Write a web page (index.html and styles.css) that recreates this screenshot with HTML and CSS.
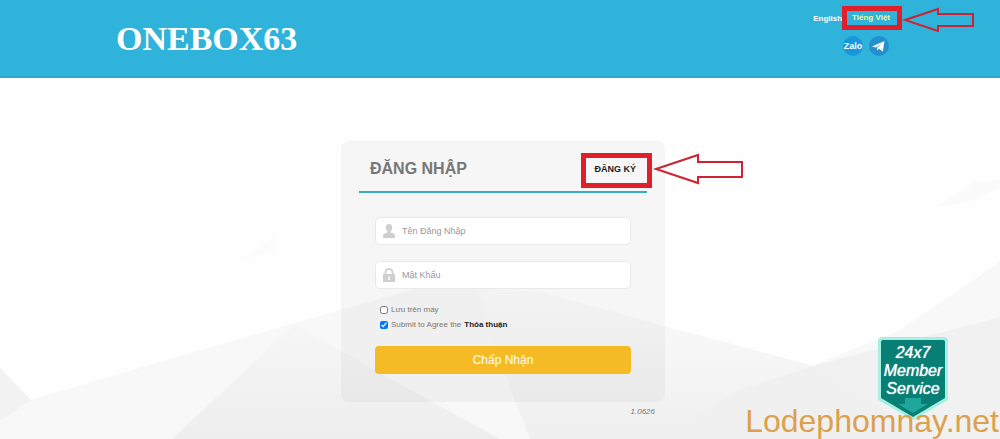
FILE: index.html
```html
<!DOCTYPE html>
<html lang="vi">
<head>
  <meta charset="UTF-8" />
  <meta name="viewport" content="width=device-width, initial-scale=1" />
  <title>ONEBOX63</title>
  <link rel="stylesheet" href="styles.css">
</head>
<body>

  <!-- background facets -->
  <svg class="backdrop" viewBox="0 0 1000 439" preserveAspectRatio="none" aria-hidden="true">
    <defs>
      <linearGradient id="fade" x1="0" y1="0" x2="0" y2="1">
        <stop offset="0" stop-color="#fbfbfb" />
        <stop offset="1" stop-color="#efefef" />
      </linearGradient>
      <linearGradient id="hill" x1="0" y1="0" x2="0" y2="1">
        <stop offset="0" stop-color="#f6f6f6" />
        <stop offset="1" stop-color="#eeeeee" />
      </linearGradient>
    </defs>
    <path d="M0 439V421L31 400L180 356L340 310L425 286L540 292L660 325L813 366L900 330L1000 262V439Z" fill="#f8f8f8" />
    <path d="M0 368L31 400L0 421Z" fill="#f2f2f2" />
    <path d="M172 439L295 324L340 350L380 373L500 439Z" fill="url(#hill)" />
    <path d="M478 289L540 292L660 325L813 366L1000 400V439H530L505 375Z" fill="url(#fade)" />
    <path d="M813 366L1000 317V439H900Z" fill="#f1f1f1" />
    <path d="M813 366L740 390L660 439H930Z" fill="#f0f0f0" />
    <path d="M937 207L975 182L1000 180V188L965 203Z" fill="#fbfbfb" />
    <path d="M239 260L276 235V251Z" fill="#fcfcfc" />
  </svg>

  <header class="header">
    <div class="logo">ONEBOX63</div>
    <div class="tools">
      <nav class="langs">
        <a href="#">English</a>
        <a href="#" class="active marked">Tiếng Việt</a>
        <svg class="arrow arrow-lang" viewBox="0 0 72 26" aria-hidden="true">
          <path d="M3 14L36 3V8H71V20H36V25Z" />
        </svg>
      </nav>
      <div class="social">
        <a href="#" aria-label="Zalo" class="zalo">Zalo</a>
        <a href="#" aria-label="Telegram" class="telegram">
          <svg viewBox="0 0 20 20">
            <path d="M3 10.500L15.500 5L13.800 15.500L9.800 12.800L8 14.500V11.800L12.500 7.800L6.800 11.400Z" />
          </svg>
        </a>
      </div>
    </div>
  </header>

  <main class="main">
    <section class="card">
      <div class="card-head">
        <h1>ĐĂNG NHẬP</h1>
        <a href="#" class="register marked">ĐĂNG KÝ</a>
        <svg class="arrow arrow-register" viewBox="0 0 92 32" aria-hidden="true">
          <path d="M4 16L46 2V9H90V24H46V30Z" />
        </svg>
      </div>

      <form class="form">
        <label class="field">
          <svg viewBox="0 0 12 14" aria-hidden="true">
            <path d="M6 0C8 0 9.300 1.400 9.300 3.500C9.300 5.300 8.500 6.600 7.600 7.300V8.400L10.500 9.500Q12 10.200 12 12V14H0V12Q0 10.200 1.500 9.500L4.400 8.400V7.300C3.500 6.600 2.700 5.300 2.700 3.500C2.700 1.400 4 0 6 0Z" />
          </svg>
          <input type="text" placeholder="Tên Đăng Nhập" aria-label="Tên Đăng Nhập" />
        </label>
        <label class="field">
          <svg viewBox="0 0 12 14" aria-hidden="true">
            <path fill-rule="evenodd" d="M1.500 6V4.500C1.500 1.800 3.400 0 6 0S10.500 1.800 10.500 4.500V6H12V14H0V6ZM3.300 6H8.700V4.500C8.700 2.800 7.600 1.700 6 1.700S3.300 2.800 3.300 4.500ZM5.300 8.200V12H6.700V8.200Z" />
          </svg>
          <input type="password" placeholder="Mật Khẩu" aria-label="Mật Khẩu" />
        </label>

        <div class="options">
          <div class="option">
            <input type="checkbox" id="remember" />
            <label for="remember">Lưu trên máy</label>
          </div>
          <div class="option">
            <input type="checkbox" id="agree" checked />
            <label for="agree">Submit to Agree the</label>
            <a href="#">Thỏa thuận</a>
          </div>
        </div>

        <button type="submit" class="submit">Chấp Nhận</button>
      </form>
    </section>
    <div class="version">1.0626</div>
  </main>

  <a href="#" class="service">
    <svg viewBox="0 0 70 84" aria-hidden="true">
      <path d="M4 0H66Q70 0 70 4V63L35 83L0 63V4Q0 0 4 0Z" fill="#a5efe3" />
      <path d="M5 3H65Q67 3 67 5V61L35 80L3 61V5Q3 3 5 3Z" fill="#087f75" />
      <path d="M27 61H43V67H50L35 76L20 67H27Z" fill="#1fa79b" />
    </svg>
    <span>24x7<br>Member<br>Service</span>
  </a>
  <div class="site-name">Lodephomnay.net</div>

</body>
</html>
```

FILE: styles.css
```css
* {
  box-sizing: border-box;
}

body {
  position: relative;
  margin: 0;
  min-height: 100vh;
  overflow: hidden;
  font-family: "Liberation Sans", Arial, sans-serif;
  font-size: 8px;
  color: #777;
  background: #fefefe;
}

a {
  color: inherit;
  text-decoration: none;
}

.backdrop {
  position: absolute;
  inset: 0;
  z-index: -1;
  width: 100%;
  height: 100%;
}

/* header */
.header {
  display: flex;
  justify-content: space-between;
  align-items: center;
  height: 78px;
  padding: 0 98px 0 116px;
  color: #fff;
  background: #30b3da;
  border-bottom: 2px solid #2ba6d0;
}

.logo {
  padding-top: 2px;
  font-family: "Liberation Serif", "Times New Roman", serif;
  font-size: 34px;
  font-weight: bold;
}

.tools {
  display: flex;
  flex-direction: column;
  align-items: flex-end;
  gap: 6px;
  padding-bottom: 14px;
}

.langs {
  position: relative;
  display: flex;
  align-items: center;
  font-weight: bold;
}

.marked {
  border: 5px solid #e01f2b;
}

.langs .marked {
  padding: 2px 7px 2px 5px;
  line-height: 10px;
}

.langs .active {
  color: #f6f78c;
}

.arrow {
  position: absolute;
  fill: none;
  stroke: #cf2333;
  stroke-width: 2;
}

.arrow-lang {
  left: 100%;
  top: 0;
  width: 72px;
  height: 26px;
}

.social {
  display: flex;
  gap: 6px;
  padding-right: 13px;
}

.social a {
  display: flex;
  align-items: center;
  justify-content: center;
  width: 20px;
  height: 20px;
  border-radius: 50%;
  background: #1797dc;
}

.social .zalo {
  font-size: 9px;
  font-weight: bold;
}

.social .telegram {
  background: #2190cd;
}

.telegram svg {
  width: 20px;
  height: 20px;
  fill: #fff;
}

/* login card */
.main {
  width: 324px;
  max-width: 100%;
  margin: 63px auto 0;
  position: relative;
  left: 3px;
}

.card {
  padding: 12px 18px 28px;
  border-radius: 8px;
  background: rgba(0, 0, 0, 0.03);
}

.card-head {
  position: relative;
  display: flex;
  justify-content: space-between;
  align-items: center;
  padding: 0 0 3px 11px;
  border-bottom: 2px solid #35adbd;
}

.card-head h1 {
  margin: 0;
  padding-bottom: 3px;
  font-size: 16px;
  color: #777;
}

.register {
  margin-right: -5px;
  padding: 6px 11px 9px 8px;
  font-size: 9px;
  line-height: 10px;
  font-weight: bold;
  color: #222;
}

.arrow-register {
  left: 100%;
  top: 0;
  width: 92px;
  height: 32px;
  margin-left: 5px;
}

.form {
  display: flex;
  flex-direction: column;
  gap: 16px;
  padding: 24px 16px 0;
}

.field {
  display: flex;
  align-items: center;
  gap: 7px;
  height: 28px;
  padding: 0 7px;
  border: 1px solid #e9e9e9;
  border-radius: 5px;
  background: #fff;
}

.field svg {
  width: 12px;
  height: 14px;
  fill: #cfcfcf;
}

.field input {
  flex: 1;
  min-width: 0;
  padding: 0;
  border: 0;
  outline: 0;
  font: inherit;
  font-size: 9px;
  background: none;
}

.field input::placeholder {
  color: #999;
}

.options {
  margin: -3px 0 -2px;
  padding-left: 5px;
}

.option {
  display: flex;
  align-items: center;
  gap: 3px;
  height: 15px;
}

.option input {
  width: 8px;
  height: 8px;
  margin: 0;
}

.option a {
  font-weight: bold;
  color: #222;
}

.submit {
  height: 28px;
  padding: 0;
  border: 0;
  border-radius: 4px;
  font: inherit;
  font-size: 12px;
  color: #fff;
  background: #f5bb26;
  cursor: pointer;
}

.version {
  padding: 5px 10px 0 0;
  font-style: italic;
  text-align: right;
}

/* floating badge and site name */
.service {
  position: absolute;
  right: 52px;
  bottom: 18px;
  width: 70px;
  height: 84px;
  color: #fff;
}

.service svg {
  position: absolute;
  inset: 0;
}

.service span {
  position: relative;
  display: block;
  padding-top: 7px;
  font-size: 16px;
  line-height: 18px;
  font-style: italic;
  text-align: center;
  text-shadow: 0 0 1px #fff;
}

.site-name {
  position: absolute;
  right: 1px;
  bottom: 0;
  font-size: 32px;
  line-height: 36px;
  color: #dca14d;
}
```
